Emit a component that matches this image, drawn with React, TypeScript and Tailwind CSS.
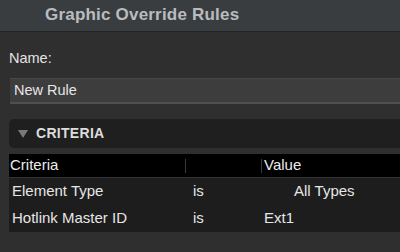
export default function App() {
  const font = { fontFamily: '"Liberation Sans", Arial, sans-serif' };
  return (
    <div className="w-[400px] h-[252px] overflow-hidden bg-[#2f2f2f] flex flex-col" style={font}>
      <div className="h-[32px] shrink-0 bg-[#3a3d40] border-b border-[#232425] flex items-center pl-[45px] pb-[2px]">
        <span className="text-[17px] font-bold text-[#b9bcbf] tracking-[0.2px]">Graphic Override Rules</span>
      </div>
      <div className="flex flex-col pl-[9px]">
        <div className="h-[46px] flex items-end pb-[8px] text-[14.5px] text-[#e4e4e4]">Name:</div>
        <div className="h-[26px] -mr-[10px] bg-[#3d3d3d] border-t border-[#484848] border-b-2 border-b-[#4f4f4f] flex items-center pl-[4px] text-[14.5px] text-[#e6e6e6] ml-[1px]">New Rule</div>
        <div className="h-[15px]" />
        <div className="h-[29px] -mr-[10px] bg-[#1f1f1f] rounded-[5px] flex items-center pl-[9px] gap-[8px]">
          <svg width="10" height="8" viewBox="0 0 10 8"><path d="M0 0 L10 0 L5 8 Z" fill="#7a7a7a" /></svg>
          <span className="text-[14px] font-bold text-[#dcdcdc] tracking-[0.3px]">CRITERIA</span>
        </div>
        <div className="h-[6px]" />
        <div className="h-[24px] bg-black flex items-center text-[15px] text-[#ececec] border-b border-[#333]">
          <div className="w-[176px] pl-[1px]">Criteria</div>
          <div className="w-[1px] h-[14px] bg-[#3a3a3a]" />
          <div className="w-[75px]" />
          <div className="w-[1px] h-[14px] bg-[#3a3a3a]" />
          <div className="pl-[2px]">Value</div>
        </div>
        <div className="flex-1 bg-[#1d1d1d] h-[80px] text-[15px] text-[#e6e6e6]">
          <div className="h-[27px] flex items-center">
            <div className="w-[184px] pl-[3px]">Element Type</div>
            <div className="w-[101px]">is</div>
            <div>All Types</div>
          </div>
          <div className="h-[27px] flex items-center">
            <div className="w-[184px] pl-[3px]">Hotlink Master ID</div>
            <div className="w-[71px]">is</div>
            <div>Ext1</div>
          </div>
        </div>
      </div>
    </div>
  );
}
